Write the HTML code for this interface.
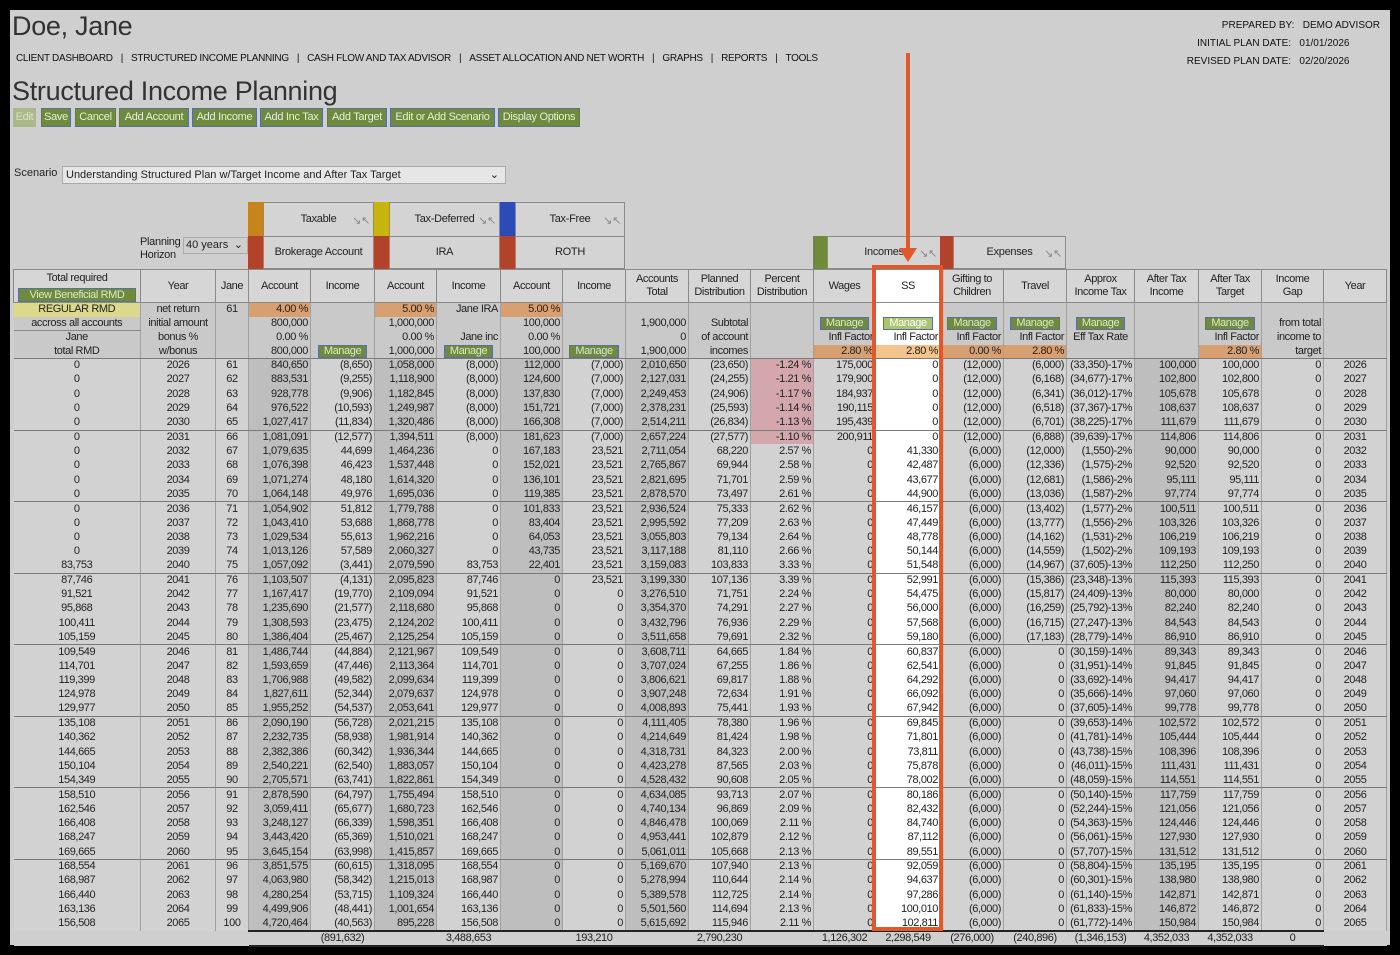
<!DOCTYPE html>
<html><head><meta charset="utf-8"><style>
*{box-sizing:border-box;margin:0;padding:0}
html,body{width:1400px;height:955px;background:#000;overflow:hidden;font-family:"Liberation Sans",sans-serif;color:#222}
#pg{position:absolute;left:10px;top:10px;width:1380px;height:935px;background:#cfcfcf}
.a{position:absolute;white-space:nowrap}
h1{position:absolute;font-weight:normal;font-size:27px;color:#333;letter-spacing:-0.3px}
.nav{position:absolute;left:6px;top:43px;font-size:10px;letter-spacing:-0.3px;color:#111}
.nav span{margin:0 8px}
.btn{position:absolute;top:98px;height:19px;background:#6e8b3d;border:1px solid #5a6f9a;color:#e6eedb;font-size:11px;line-height:17px;text-align:center;letter-spacing:-0.3px}
.rt{position:absolute;right:10px;font-size:10px;color:#111;text-align:right}
.gb{position:absolute;border:1px solid #8a8a8a;background:#d4d4d4;font-size:11px;text-align:center;letter-spacing:-0.3px}
.bar{position:absolute}
.ic{position:absolute;right:3px;top:2px;color:#888;font-size:11px}
table{position:absolute;left:3px;top:259px;border-collapse:collapse;table-layout:fixed;font-size:11px;letter-spacing:-0.4px}
td{border-right:1px solid #a0a0a0;white-space:nowrap;overflow:hidden;padding:0 2px;text-align:right;height:14.32px;line-height:13px;background:#d2d2d2}
tr.h td{height:33px;text-align:center;line-height:13px;background:#d6d6d6;border:1px solid #8a8a8a;padding:0}
tr.s td{height:14px;background:#c9c9c9}
tr.d td:nth-child(1),tr.d td:nth-child(2),tr.d td:nth-child(3),tr.d td:nth-child(21){text-align:center}
tr.d td:nth-child(4),tr.d td:nth-child(6),tr.d td:nth-child(8),tr.d td:nth-child(10),tr.d td:nth-child(18){background:#bebebe}
tr.g td{border-bottom:1px solid #7a7a7a}
td.p{background:#d4a7ad!important}
td.o{background:#d8a070!important}
td.y{background:#dcd98a!important;text-align:center}
td.c{text-align:center}
.m{display:inline-block;background:#6e8b3d;border:1px solid #5a6f9a;color:#dce6cc;height:13px;line-height:11px;padding:0 5px;font-size:11px}
tr.t td{background:#cfcfcf;border-right:none;border-top:2px solid #222;border-bottom:2px solid #222;text-align:center;height:14px}
tr.t td.n{border-top:none;border-bottom:none}
td:nth-child(14){background:#fff!important}
</style></head><body><div id="pg">
<h1 style="left:2px;top:1px">Doe, Jane</h1>
<div class="nav"><span style="margin-left:0">CLIENT DASHBOARD</span>|<span>STRUCTURED INCOME PLANNING</span>|<span>CASH FLOW AND TAX ADVISOR</span>|<span>ASSET ALLOCATION AND NET WORTH</span>|<span>GRAPHS</span>|<span>REPORTS</span>|<span>TOOLS</span></div>
<div class="rt" style="top:10px">PREPARED BY:&nbsp;&nbsp;&nbsp;DEMO ADVISOR</div>
<div class="rt" style="top:28px">INITIAL PLAN DATE:&nbsp;&nbsp;&nbsp;01/01/2026&nbsp;&nbsp;&nbsp;&nbsp;&nbsp;&nbsp;&nbsp;&nbsp;&nbsp;&nbsp;&nbsp;</div>
<div class="rt" style="top:46px">REVISED PLAN DATE:&nbsp;&nbsp;&nbsp;02/20/2026&nbsp;&nbsp;&nbsp;&nbsp;&nbsp;&nbsp;&nbsp;&nbsp;&nbsp;&nbsp;&nbsp;</div>
<h1 style="left:2px;top:66px">Structured Income Planning</h1>
<div class="btn" style="left:3px;width:23px;background:#a9b98a;border-color:#a9b98a;color:#d8e0c8">Edit</div>
<div class="btn" style="left:31px;width:30px">Save</div>
<div class="btn" style="left:65px;width:41px">Cancel</div>
<div class="btn" style="left:109px;width:70px">Add Account</div>
<div class="btn" style="left:182px;width:65px">Add Income</div>
<div class="btn" style="left:250px;width:63px">Add Inc Tax</div>
<div class="btn" style="left:317px;width:60px">Add Target</div>
<div class="btn" style="left:380px;width:105px">Edit or Add Scenario</div>
<div class="btn" style="left:488px;width:82px">Display Options</div>
<div class="a" style="left:4px;top:157px;font-size:11px">Scenario</div>
<div class="a" style="left:52px;top:156px;width:444px;height:18px;background:#e6e6e6;border:1px solid #aaa;font-size:11px;line-height:16px;padding-left:3px">Understanding Structured Plan w/Target Income and After Tax Target<span style="position:absolute;right:6px">&#8964;</span></div>

<div class="bar" style="left:238px;top:192px;width:15px;height:34px;background:#c6841c"></div>
<div class="bar" style="left:238px;top:226px;width:15px;height:33px;background:#b0432a"></div>
<div class="gb" style="left:253px;top:192px;width:111px;height:35px;line-height:33px">Taxable<span class="ic">&#8600;&#8598;</span></div>
<div class="gb" style="left:253px;top:226px;width:111px;height:33px;line-height:31px">Brokerage Account</div>
<div class="bar" style="left:364px;top:192px;width:15px;height:34px;background:#c8b40e"></div>
<div class="bar" style="left:364px;top:226px;width:15px;height:33px;background:#b0432a"></div>
<div class="gb" style="left:379px;top:192px;width:111px;height:35px;line-height:33px">Tax-Deferred<span class="ic">&#8600;&#8598;</span></div>
<div class="gb" style="left:379px;top:226px;width:111px;height:33px;line-height:31px">IRA</div>
<div class="bar" style="left:490px;top:192px;width:15px;height:34px;background:#2c4bb4"></div>
<div class="bar" style="left:490px;top:226px;width:15px;height:33px;background:#b0432a"></div>
<div class="gb" style="left:505px;top:192px;width:110px;height:35px;line-height:33px">Tax-Free<span class="ic">&#8600;&#8598;</span></div>
<div class="gb" style="left:505px;top:226px;width:110px;height:33px;line-height:31px">ROTH</div>
<div class="a" style="left:130px;top:226px;font-size:11px;line-height:13px;letter-spacing:-0.3px">Planning<br>Horizon</div>
<div class="a" style="left:173px;top:227px;width:65px;height:17px;border:1px solid #aaa;font-size:11px;line-height:15px;padding-left:2px">40 years <span style="position:absolute;right:4px">&#8964;</span></div>
<div class="bar" style="left:803px;top:226px;width:14px;height:33px;background:#6f8a3a"></div>
<div class="gb" style="left:817px;top:226px;width:114px;height:33px;line-height:31px">Incomes<span class="ic">&#8600;&#8598;</span></div>
<div class="bar" style="left:930px;top:226px;width:13px;height:33px;background:#b0432a"></div>
<div class="gb" style="left:943px;top:226px;width:113px;height:33px;line-height:31px">Expenses<span class="ic">&#8600;&#8598;</span></div>

<table>
<colgroup><col style="width:127px"><col style="width:75px"><col style="width:33px"><col style="width:62px"><col style="width:64px"><col style="width:62px"><col style="width:64px"><col style="width:62px"><col style="width:63px"><col style="width:63px"><col style="width:62px"><col style="width:63px"><col style="width:62px"><col style="width:65px"><col style="width:63px"><col style="width:63px"><col style="width:68px"><col style="width:64px"><col style="width:63px"><col style="width:62px"><col style="width:63px"></colgroup>
<tr class="h"><td style="vertical-align:top;padding-top:2px">Total required<br><span class="m" style="margin-top:3px;width:118px;height:14px;line-height:12px">View Beneficial RMD</span></td><td>Year</td><td>Jane</td><td>Account</td><td>Income</td><td>Account</td><td>Income</td><td>Account</td><td>Income</td><td>Accounts<br>Total</td><td>Planned<br>Distribution</td><td>Percent<br>Distribution</td><td>Wages</td><td>SS</td><td>Gifting to<br>Children</td><td>Travel</td><td>Approx<br>Income Tax</td><td>After Tax<br>Income</td><td>After Tax<br>Target</td><td>Income<br>Gap</td><td>Year</td></tr>
<tr class="s"><td class="y">REGULAR RMD</td><td class="c">net return</td><td class="c">61</td><td class="o">4.00 %</td><td></td><td class="o">5.00 %</td><td>Jane IRA</td><td class="o">5.00 %</td><td></td><td></td><td></td><td></td><td></td><td></td><td></td><td></td><td></td><td></td><td></td><td></td><td></td></tr>
<tr class="s"><td class="c" style="border-bottom:1px solid #888">accross all accounts</td><td class="c">initial amount</td><td></td><td>800,000</td><td></td><td>1,000,000</td><td></td><td>100,000</td><td></td><td>1,900,000</td><td>Subtotal</td><td></td><td class="c"><span class="m">Manage</span></td><td class="c"><span class="m" style="background:#a9c46c;color:#fff">Manage</span></td><td class="c"><span class="m">Manage</span></td><td class="c"><span class="m">Manage</span></td><td class="c"><span class="m">Manage</span></td><td></td><td class="c"><span class="m">Manage</span></td><td>from total</td><td></td></tr>
<tr class="s"><td class="c">Jane</td><td class="c">bonus %</td><td></td><td>0.00 %</td><td></td><td>0.00 %</td><td>Jane inc</td><td>0.00 %</td><td></td><td>0</td><td>of account</td><td></td><td>Infl Factor</td><td>Infl Factor</td><td>Infl Factor</td><td>Infl Factor</td><td class="c">Eff Tax Rate</td><td></td><td>Infl Factor</td><td>income to</td><td></td></tr>
<tr class="s g"><td class="c">total RMD</td><td class="c">w/bonus</td><td></td><td>800,000</td><td class="c"><span class="m">Manage</span></td><td>1,000,000</td><td class="c"><span class="m">Manage</span></td><td>100,000</td><td class="c"><span class="m">Manage</span></td><td>1,900,000</td><td>incomes</td><td></td><td class="o">2.80 %</td><td class="o" style="background:#f2c48e!important">2.80 %</td><td class="o">0.00 %</td><td class="o">2.80 %</td><td></td><td></td><td class="o">2.80 %</td><td>target</td><td></td></tr>
<tr class="d"><td>0</td><td>2026</td><td>61</td><td>840,650</td><td>(8,650)</td><td>1,058,000</td><td>(8,000)</td><td>112,000</td><td>(7,000)</td><td>2,010,650</td><td>(23,650)</td><td class="p">-1.24 %</td><td>175,000</td><td>0</td><td>(12,000)</td><td>(6,000)</td><td>(33,350)-17%</td><td>100,000</td><td>100,000</td><td>0</td><td>2026</td></tr>
<tr class="d"><td>0</td><td>2027</td><td>62</td><td>883,531</td><td>(9,255)</td><td>1,118,900</td><td>(8,000)</td><td>124,600</td><td>(7,000)</td><td>2,127,031</td><td>(24,255)</td><td class="p">-1.21 %</td><td>179,900</td><td>0</td><td>(12,000)</td><td>(6,168)</td><td>(34,677)-17%</td><td>102,800</td><td>102,800</td><td>0</td><td>2027</td></tr>
<tr class="d"><td>0</td><td>2028</td><td>63</td><td>928,778</td><td>(9,906)</td><td>1,182,845</td><td>(8,000)</td><td>137,830</td><td>(7,000)</td><td>2,249,453</td><td>(24,906)</td><td class="p">-1.17 %</td><td>184,937</td><td>0</td><td>(12,000)</td><td>(6,341)</td><td>(36,012)-17%</td><td>105,678</td><td>105,678</td><td>0</td><td>2028</td></tr>
<tr class="d"><td>0</td><td>2029</td><td>64</td><td>976,522</td><td>(10,593)</td><td>1,249,987</td><td>(8,000)</td><td>151,721</td><td>(7,000)</td><td>2,378,231</td><td>(25,593)</td><td class="p">-1.14 %</td><td>190,115</td><td>0</td><td>(12,000)</td><td>(6,518)</td><td>(37,367)-17%</td><td>108,637</td><td>108,637</td><td>0</td><td>2029</td></tr>
<tr class="d g"><td>0</td><td>2030</td><td>65</td><td>1,027,417</td><td>(11,834)</td><td>1,320,486</td><td>(8,000)</td><td>166,308</td><td>(7,000)</td><td>2,514,211</td><td>(26,834)</td><td class="p">-1.13 %</td><td>195,439</td><td>0</td><td>(12,000)</td><td>(6,701)</td><td>(38,225)-17%</td><td>111,679</td><td>111,679</td><td>0</td><td>2030</td></tr>
<tr class="d"><td>0</td><td>2031</td><td>66</td><td>1,081,091</td><td>(12,577)</td><td>1,394,511</td><td>(8,000)</td><td>181,623</td><td>(7,000)</td><td>2,657,224</td><td>(27,577)</td><td class="p">-1.10 %</td><td>200,911</td><td>0</td><td>(12,000)</td><td>(6,888)</td><td>(39,639)-17%</td><td>114,806</td><td>114,806</td><td>0</td><td>2031</td></tr>
<tr class="d"><td>0</td><td>2032</td><td>67</td><td>1,079,635</td><td>44,699</td><td>1,464,236</td><td>0</td><td>167,183</td><td>23,521</td><td>2,711,054</td><td>68,220</td><td>2.57 %</td><td>0</td><td>41,330</td><td>(6,000)</td><td>(12,000)</td><td>(1,550)-2%</td><td>90,000</td><td>90,000</td><td>0</td><td>2032</td></tr>
<tr class="d"><td>0</td><td>2033</td><td>68</td><td>1,076,398</td><td>46,423</td><td>1,537,448</td><td>0</td><td>152,021</td><td>23,521</td><td>2,765,867</td><td>69,944</td><td>2.58 %</td><td>0</td><td>42,487</td><td>(6,000)</td><td>(12,336)</td><td>(1,575)-2%</td><td>92,520</td><td>92,520</td><td>0</td><td>2033</td></tr>
<tr class="d"><td>0</td><td>2034</td><td>69</td><td>1,071,274</td><td>48,180</td><td>1,614,320</td><td>0</td><td>136,101</td><td>23,521</td><td>2,821,695</td><td>71,701</td><td>2.59 %</td><td>0</td><td>43,677</td><td>(6,000)</td><td>(12,681)</td><td>(1,586)-2%</td><td>95,111</td><td>95,111</td><td>0</td><td>2034</td></tr>
<tr class="d g"><td>0</td><td>2035</td><td>70</td><td>1,064,148</td><td>49,976</td><td>1,695,036</td><td>0</td><td>119,385</td><td>23,521</td><td>2,878,570</td><td>73,497</td><td>2.61 %</td><td>0</td><td>44,900</td><td>(6,000)</td><td>(13,036)</td><td>(1,587)-2%</td><td>97,774</td><td>97,774</td><td>0</td><td>2035</td></tr>
<tr class="d"><td>0</td><td>2036</td><td>71</td><td>1,054,902</td><td>51,812</td><td>1,779,788</td><td>0</td><td>101,833</td><td>23,521</td><td>2,936,524</td><td>75,333</td><td>2.62 %</td><td>0</td><td>46,157</td><td>(6,000)</td><td>(13,402)</td><td>(1,577)-2%</td><td>100,511</td><td>100,511</td><td>0</td><td>2036</td></tr>
<tr class="d"><td>0</td><td>2037</td><td>72</td><td>1,043,410</td><td>53,688</td><td>1,868,778</td><td>0</td><td>83,404</td><td>23,521</td><td>2,995,592</td><td>77,209</td><td>2.63 %</td><td>0</td><td>47,449</td><td>(6,000)</td><td>(13,777)</td><td>(1,556)-2%</td><td>103,326</td><td>103,326</td><td>0</td><td>2037</td></tr>
<tr class="d"><td>0</td><td>2038</td><td>73</td><td>1,029,534</td><td>55,613</td><td>1,962,216</td><td>0</td><td>64,053</td><td>23,521</td><td>3,055,803</td><td>79,134</td><td>2.64 %</td><td>0</td><td>48,778</td><td>(6,000)</td><td>(14,162)</td><td>(1,531)-2%</td><td>106,219</td><td>106,219</td><td>0</td><td>2038</td></tr>
<tr class="d"><td>0</td><td>2039</td><td>74</td><td>1,013,126</td><td>57,589</td><td>2,060,327</td><td>0</td><td>43,735</td><td>23,521</td><td>3,117,188</td><td>81,110</td><td>2.66 %</td><td>0</td><td>50,144</td><td>(6,000)</td><td>(14,559)</td><td>(1,502)-2%</td><td>109,193</td><td>109,193</td><td>0</td><td>2039</td></tr>
<tr class="d g"><td>83,753</td><td>2040</td><td>75</td><td>1,057,092</td><td>(3,441)</td><td>2,079,590</td><td>83,753</td><td>22,401</td><td>23,521</td><td>3,159,083</td><td>103,833</td><td>3.33 %</td><td>0</td><td>51,548</td><td>(6,000)</td><td>(14,967)</td><td>(37,605)-13%</td><td>112,250</td><td>112,250</td><td>0</td><td>2040</td></tr>
<tr class="d"><td>87,746</td><td>2041</td><td>76</td><td>1,103,507</td><td>(4,131)</td><td>2,095,823</td><td>87,746</td><td>0</td><td>23,521</td><td>3,199,330</td><td>107,136</td><td>3.39 %</td><td>0</td><td>52,991</td><td>(6,000)</td><td>(15,386)</td><td>(23,348)-13%</td><td>115,393</td><td>115,393</td><td>0</td><td>2041</td></tr>
<tr class="d"><td>91,521</td><td>2042</td><td>77</td><td>1,167,417</td><td>(19,770)</td><td>2,109,094</td><td>91,521</td><td>0</td><td>0</td><td>3,276,510</td><td>71,751</td><td>2.24 %</td><td>0</td><td>54,475</td><td>(6,000)</td><td>(15,817)</td><td>(24,409)-13%</td><td>80,000</td><td>80,000</td><td>0</td><td>2042</td></tr>
<tr class="d"><td>95,868</td><td>2043</td><td>78</td><td>1,235,690</td><td>(21,577)</td><td>2,118,680</td><td>95,868</td><td>0</td><td>0</td><td>3,354,370</td><td>74,291</td><td>2.27 %</td><td>0</td><td>56,000</td><td>(6,000)</td><td>(16,259)</td><td>(25,792)-13%</td><td>82,240</td><td>82,240</td><td>0</td><td>2043</td></tr>
<tr class="d"><td>100,411</td><td>2044</td><td>79</td><td>1,308,593</td><td>(23,475)</td><td>2,124,202</td><td>100,411</td><td>0</td><td>0</td><td>3,432,796</td><td>76,936</td><td>2.29 %</td><td>0</td><td>57,568</td><td>(6,000)</td><td>(16,715)</td><td>(27,247)-13%</td><td>84,543</td><td>84,543</td><td>0</td><td>2044</td></tr>
<tr class="d g"><td>105,159</td><td>2045</td><td>80</td><td>1,386,404</td><td>(25,467)</td><td>2,125,254</td><td>105,159</td><td>0</td><td>0</td><td>3,511,658</td><td>79,691</td><td>2.32 %</td><td>0</td><td>59,180</td><td>(6,000)</td><td>(17,183)</td><td>(28,779)-14%</td><td>86,910</td><td>86,910</td><td>0</td><td>2045</td></tr>
<tr class="d"><td>109,549</td><td>2046</td><td>81</td><td>1,486,744</td><td>(44,884)</td><td>2,121,967</td><td>109,549</td><td>0</td><td>0</td><td>3,608,711</td><td>64,665</td><td>1.84 %</td><td>0</td><td>60,837</td><td>(6,000)</td><td>0</td><td>(30,159)-14%</td><td>89,343</td><td>89,343</td><td>0</td><td>2046</td></tr>
<tr class="d"><td>114,701</td><td>2047</td><td>82</td><td>1,593,659</td><td>(47,446)</td><td>2,113,364</td><td>114,701</td><td>0</td><td>0</td><td>3,707,024</td><td>67,255</td><td>1.86 %</td><td>0</td><td>62,541</td><td>(6,000)</td><td>0</td><td>(31,951)-14%</td><td>91,845</td><td>91,845</td><td>0</td><td>2047</td></tr>
<tr class="d"><td>119,399</td><td>2048</td><td>83</td><td>1,706,988</td><td>(49,582)</td><td>2,099,634</td><td>119,399</td><td>0</td><td>0</td><td>3,806,621</td><td>69,817</td><td>1.88 %</td><td>0</td><td>64,292</td><td>(6,000)</td><td>0</td><td>(33,692)-14%</td><td>94,417</td><td>94,417</td><td>0</td><td>2048</td></tr>
<tr class="d"><td>124,978</td><td>2049</td><td>84</td><td>1,827,611</td><td>(52,344)</td><td>2,079,637</td><td>124,978</td><td>0</td><td>0</td><td>3,907,248</td><td>72,634</td><td>1.91 %</td><td>0</td><td>66,092</td><td>(6,000)</td><td>0</td><td>(35,666)-14%</td><td>97,060</td><td>97,060</td><td>0</td><td>2049</td></tr>
<tr class="d g"><td>129,977</td><td>2050</td><td>85</td><td>1,955,252</td><td>(54,537)</td><td>2,053,641</td><td>129,977</td><td>0</td><td>0</td><td>4,008,893</td><td>75,441</td><td>1.93 %</td><td>0</td><td>67,942</td><td>(6,000)</td><td>0</td><td>(37,605)-14%</td><td>99,778</td><td>99,778</td><td>0</td><td>2050</td></tr>
<tr class="d"><td>135,108</td><td>2051</td><td>86</td><td>2,090,190</td><td>(56,728)</td><td>2,021,215</td><td>135,108</td><td>0</td><td>0</td><td>4,111,405</td><td>78,380</td><td>1.96 %</td><td>0</td><td>69,845</td><td>(6,000)</td><td>0</td><td>(39,653)-14%</td><td>102,572</td><td>102,572</td><td>0</td><td>2051</td></tr>
<tr class="d"><td>140,362</td><td>2052</td><td>87</td><td>2,232,735</td><td>(58,938)</td><td>1,981,914</td><td>140,362</td><td>0</td><td>0</td><td>4,214,649</td><td>81,424</td><td>1.98 %</td><td>0</td><td>71,801</td><td>(6,000)</td><td>0</td><td>(41,781)-14%</td><td>105,444</td><td>105,444</td><td>0</td><td>2052</td></tr>
<tr class="d"><td>144,665</td><td>2053</td><td>88</td><td>2,382,386</td><td>(60,342)</td><td>1,936,344</td><td>144,665</td><td>0</td><td>0</td><td>4,318,731</td><td>84,323</td><td>2.00 %</td><td>0</td><td>73,811</td><td>(6,000)</td><td>0</td><td>(43,738)-15%</td><td>108,396</td><td>108,396</td><td>0</td><td>2053</td></tr>
<tr class="d"><td>150,104</td><td>2054</td><td>89</td><td>2,540,221</td><td>(62,540)</td><td>1,883,057</td><td>150,104</td><td>0</td><td>0</td><td>4,423,278</td><td>87,565</td><td>2.03 %</td><td>0</td><td>75,878</td><td>(6,000)</td><td>0</td><td>(46,011)-15%</td><td>111,431</td><td>111,431</td><td>0</td><td>2054</td></tr>
<tr class="d g"><td>154,349</td><td>2055</td><td>90</td><td>2,705,571</td><td>(63,741)</td><td>1,822,861</td><td>154,349</td><td>0</td><td>0</td><td>4,528,432</td><td>90,608</td><td>2.05 %</td><td>0</td><td>78,002</td><td>(6,000)</td><td>0</td><td>(48,059)-15%</td><td>114,551</td><td>114,551</td><td>0</td><td>2055</td></tr>
<tr class="d"><td>158,510</td><td>2056</td><td>91</td><td>2,878,590</td><td>(64,797)</td><td>1,755,494</td><td>158,510</td><td>0</td><td>0</td><td>4,634,085</td><td>93,713</td><td>2.07 %</td><td>0</td><td>80,186</td><td>(6,000)</td><td>0</td><td>(50,140)-15%</td><td>117,759</td><td>117,759</td><td>0</td><td>2056</td></tr>
<tr class="d"><td>162,546</td><td>2057</td><td>92</td><td>3,059,411</td><td>(65,677)</td><td>1,680,723</td><td>162,546</td><td>0</td><td>0</td><td>4,740,134</td><td>96,869</td><td>2.09 %</td><td>0</td><td>82,432</td><td>(6,000)</td><td>0</td><td>(52,244)-15%</td><td>121,056</td><td>121,056</td><td>0</td><td>2057</td></tr>
<tr class="d"><td>166,408</td><td>2058</td><td>93</td><td>3,248,127</td><td>(66,339)</td><td>1,598,351</td><td>166,408</td><td>0</td><td>0</td><td>4,846,478</td><td>100,069</td><td>2.11 %</td><td>0</td><td>84,740</td><td>(6,000)</td><td>0</td><td>(54,363)-15%</td><td>124,446</td><td>124,446</td><td>0</td><td>2058</td></tr>
<tr class="d"><td>168,247</td><td>2059</td><td>94</td><td>3,443,420</td><td>(65,369)</td><td>1,510,021</td><td>168,247</td><td>0</td><td>0</td><td>4,953,441</td><td>102,879</td><td>2.12 %</td><td>0</td><td>87,112</td><td>(6,000)</td><td>0</td><td>(56,061)-15%</td><td>127,930</td><td>127,930</td><td>0</td><td>2059</td></tr>
<tr class="d g"><td>169,665</td><td>2060</td><td>95</td><td>3,645,154</td><td>(63,998)</td><td>1,415,857</td><td>169,665</td><td>0</td><td>0</td><td>5,061,011</td><td>105,668</td><td>2.13 %</td><td>0</td><td>89,551</td><td>(6,000)</td><td>0</td><td>(57,707)-15%</td><td>131,512</td><td>131,512</td><td>0</td><td>2060</td></tr>
<tr class="d"><td>168,554</td><td>2061</td><td>96</td><td>3,851,575</td><td>(60,615)</td><td>1,318,095</td><td>168,554</td><td>0</td><td>0</td><td>5,169,670</td><td>107,940</td><td>2.13 %</td><td>0</td><td>92,059</td><td>(6,000)</td><td>0</td><td>(58,804)-15%</td><td>135,195</td><td>135,195</td><td>0</td><td>2061</td></tr>
<tr class="d"><td>168,987</td><td>2062</td><td>97</td><td>4,063,980</td><td>(58,342)</td><td>1,215,013</td><td>168,987</td><td>0</td><td>0</td><td>5,278,994</td><td>110,644</td><td>2.14 %</td><td>0</td><td>94,637</td><td>(6,000)</td><td>0</td><td>(60,301)-15%</td><td>138,980</td><td>138,980</td><td>0</td><td>2062</td></tr>
<tr class="d"><td>166,440</td><td>2063</td><td>98</td><td>4,280,254</td><td>(53,715)</td><td>1,109,324</td><td>166,440</td><td>0</td><td>0</td><td>5,389,578</td><td>112,725</td><td>2.14 %</td><td>0</td><td>97,286</td><td>(6,000)</td><td>0</td><td>(61,140)-15%</td><td>142,871</td><td>142,871</td><td>0</td><td>2063</td></tr>
<tr class="d"><td>163,136</td><td>2064</td><td>99</td><td>4,499,906</td><td>(48,441)</td><td>1,001,654</td><td>163,136</td><td>0</td><td>0</td><td>5,501,560</td><td>114,694</td><td>2.13 %</td><td>0</td><td>100,010</td><td>(6,000)</td><td>0</td><td>(61,833)-15%</td><td>146,872</td><td>146,872</td><td>0</td><td>2064</td></tr>
<tr class="d"><td>156,508</td><td>2065</td><td>100</td><td>4,720,464</td><td>(40,563)</td><td>895,228</td><td>156,508</td><td>0</td><td>0</td><td>5,615,692</td><td>115,946</td><td>2.11 %</td><td>0</td><td>102,811</td><td>(6,000)</td><td>0</td><td>(61,772)-14%</td><td>150,984</td><td>150,984</td><td>0</td><td>2065</td></tr>
<tr class="t"><td class="n"></td><td class="n"></td><td class="n"></td><td></td><td>(891,632)</td><td></td><td>3,488,653</td><td></td><td>193,210</td><td></td><td>2,790,230</td><td></td><td>1,126,302</td><td style="background:#cfcfcf!important">2,298,549</td><td>(276,000)</td><td>(240,896)</td><td>(1,346,153)</td><td>4,352,033</td><td>4,352,033</td><td>0</td><td class="n"></td></tr>
</table>

<div class="a" style="left:862px;top:255px;width:71px;height:666px;border:4px solid #e2572b"></div>
<div class="a" style="left:896px;top:43px;width:4px;height:200px;background:#e2572b"></div>
<div class="a" style="left:889px;top:238px;width:0;height:0;border-left:9px solid transparent;border-right:9px solid transparent;border-top:14px solid #e2572b"></div>
</div></body></html>
